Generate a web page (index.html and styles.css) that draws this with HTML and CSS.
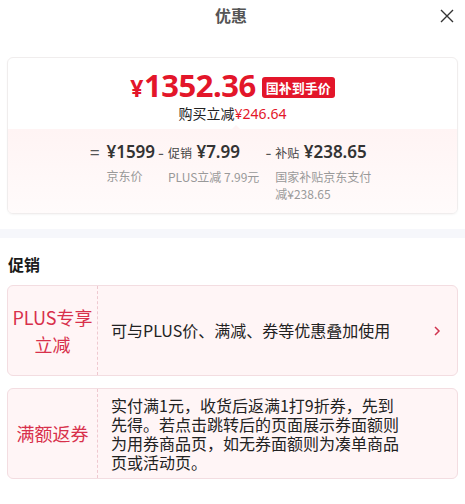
FILE: index.html
```html
<!DOCTYPE html>
<html lang="zh-CN">
<head>
    <meta charset="UTF-8">
    <title>优惠</title>
    <link rel="stylesheet" href="styles.css">
</head>
<body>
    <div class="header">
        <span></span>
        <h1 class="title">优惠</h1>
        <a class="close" href="#">
            <svg width="14" height="14" viewBox="0 0 14 14"><path d="M1 1L13 13M13 1L1 13" stroke="#333" stroke-width="1.4" fill="none"/></svg>
        </a>
    </div>

    <div class="price-card">
        <div class="price-top">
            <div class="price-line">
                <span class="price"><em>¥</em>1352.36</span>
                <span class="badge">国补到手价</span>
            </div>
            <div class="save">购买立减<span class="red">¥246.64</span></div>
        </div>
        <div class="price-bottom">
            <div class="bd-col">
                <span class="sign eq">=</span>
                <div class="bd-block">
                    <div class="bd-val">¥1599</div>
                    <div class="bd-label">京东价</div>
                </div>
            </div>
            <div class="bd-col">
                <span class="sign">-</span>
                <div class="bd-block">
                    <div class="bd-val"><small>促销</small> ¥7.99</div>
                    <div class="bd-label">PLUS立减 7.99元</div>
                </div>
            </div>
            <div class="bd-col wide">
                <span class="sign">-</span>
                <div class="bd-block">
                    <div class="bd-val"><small>补贴</small> ¥238.65</div>
                    <div class="bd-label">国家补贴京东支付减¥238.65</div>
                </div>
            </div>
        </div>
    </div>

    <div class="divider"></div>

    <h2 class="sec-title">促销</h2>

    <div class="promo">
        <div class="promo-tag">PLUS专享<br>立减</div>
        <div class="promo-body">
            <p class="promo-text">可与PLUS价、满减、券等优惠叠加使用</p>
            <span class="arrow">
                <svg width="8" height="12" viewBox="0 0 8 12"><path d="M2 2L6 6L2 10" stroke="#d0344f" stroke-width="1.5" fill="none"/></svg>
            </span>
        </div>
    </div>

    <div class="promo">
        <div class="promo-tag">满额返券</div>
        <div class="promo-body">
            <p class="promo-text long">实付满1元，收货后返满1打9折券，先到先得。若点击跳转后的页面展示券面额则为用券商品页，如无券面额则为凑单商品页或活动页。</p>
        </div>
    </div>
</body>
</html>
```

FILE: styles.css
```css
*{
    margin:0;
    padding:0;
    box-sizing:border-box;
}
body{
    width:465px;
    background:#fff;
    font-family:"Noto Sans CJK SC","Noto Sans",sans-serif;
    color:#333;
}
.header{
    display:grid;
    grid-template-columns:1fr auto 1fr;
    align-items:center;
    height:31px;
    padding:0 11px 0 8px;
}
.title{
    font-size:16px;
    font-weight:bold;
    color:#555;
    line-height:31px;
}
.close{
    justify-self:end;
    display:flex;
}
.price-card{
    margin:26px 7px 0;
    border:1px solid #f0eded;
    border-radius:6px;
    overflow:hidden;
    box-shadow:0 1px 2px rgba(0,0,0,0.04);
}
.price-top{
    padding:11px 0 5px;
    text-align:center;
}
.price-line{
    display:flex;
    justify-content:center;
    align-items:center;
    gap:6px;
    height:34px;
}
.price{
    font-family:"Noto Sans","Noto Sans CJK SC",sans-serif;
    font-size:31px;
    font-weight:bold;
    line-height:34px;
    color:#e3162a;
    letter-spacing:-0.5px;
}
.price em{
    font-style:normal;
    font-size:23px;
    margin-right:1px;
}
.badge{
    background:#e3162a;
    color:#fff;
    font-size:13px;
    font-weight:bold;
    line-height:21px;
    padding:0 4px;
    border-radius:3px;
    margin-top:2px;
}
.save{
    font-size:14px;
    line-height:20px;
    color:#222;
}
.red{
    color:#e3162a;
    font-family:"Noto Sans","Noto Sans CJK SC",sans-serif;
}
.price-bottom{
    position:relative;
    display:flex;
    gap:3px;
    padding:12px 0 11px 82px;
    background:linear-gradient(#fff4f4,#fffbfb);
}
.price-bottom::before{
    content:"";
    position:absolute;
    left:224px;
    top:-4px;
    border:4px solid transparent;
    border-top:0;
    border-bottom-color:#fff4f4;
}
.bd-col{
    display:flex;
    align-items:flex-start;
}
.bd-col.wide{
    margin-left:3px;
}
.sign{
    font-size:17px;
    line-height:22px;
    color:#555;
    margin-right:4px;
}
.sign.eq{
    margin-right:7px;
}
.bd-block{
    max-width:100px;
}
.bd-val{
    font-family:"Noto Sans","Noto Sans CJK SC",sans-serif;
    font-size:17px;
    font-weight:600;
    line-height:22px;
    color:#333;
    white-space:nowrap;
}
.bd-val small{
    font-family:"Noto Sans CJK SC",sans-serif;
    font-size:12px;
    font-weight:normal;
    color:#444;
}
.bd-label{
    margin-top:4px;
    font-size:12px;
    line-height:17px;
    color:#999;
}
.divider{
    height:9px;
    margin-top:15px;
    background:#f6f7fb;
}
.sec-title{
    font-size:16px;
    font-weight:bold;
    color:#1a1a1a;
    line-height:22px;
    padding:15px 8px 0;
}
.promo{
    display:flex;
    height:91px;
    margin:10px 7px 12px;
    background:#fff5f6;
    border:1px solid #f3dde1;
    border-radius:6px;
}
.promo-tag{
    display:flex;
    align-items:center;
    justify-content:center;
    width:90px;
    flex-shrink:0;
    border-right:1px dashed #efc9d0;
    text-align:center;
    font-size:18px;
    line-height:27px;
    color:#d8304b;
}
.promo-body{
    flex:1;
    display:flex;
    align-items:center;
    padding:0 16px 0 13px;
}
.promo-text{
    font-size:16px;
    line-height:19px;
    color:#222;
}
.promo-text.long{
    width:291px;
}
.arrow{
    display:flex;
    margin-left:auto;
}
```
